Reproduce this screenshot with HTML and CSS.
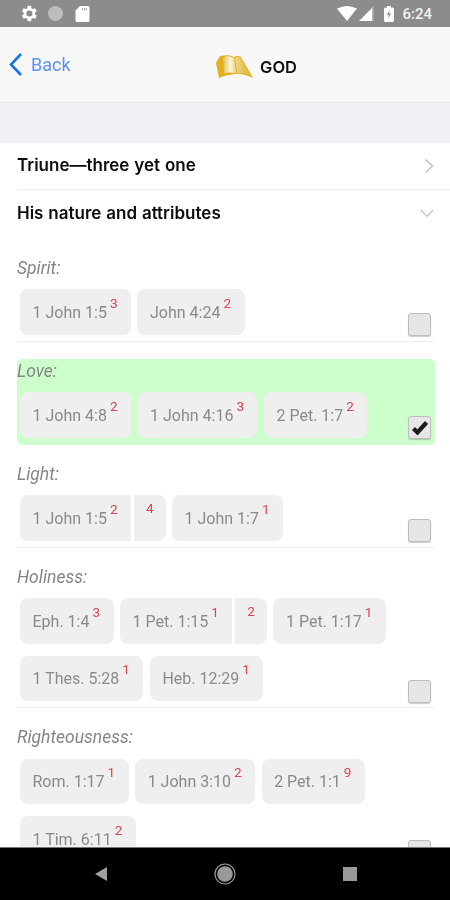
FILE: index.html
```html
<!DOCTYPE html>
<html lang="en">
<head>
    <meta charset="UTF-8">
    <meta name="viewport" content="width=device-width, initial-scale=1.0">
    <title>God</title>
    <link rel="stylesheet" href="styles.css">
</head>
<body>
<div class="phone">

    <div class="statusbar">
        <div class="status-left">
            <svg width="21" height="21" viewBox="0 0 24 24"><path fill="#fff" d="M19.400 13a7.500 7.500 0 0 0 0-2l2.100-1.600-2-3.500-2.500 1a7.500 7.500 0 0 0-1.700-1L15 3.200h-4l-.4 2.700a7.500 7.500 0 0 0-1.700 1l-2.500-1-2 3.500L6.500 11a7.500 7.500 0 0 0 0 2l-2.100 1.600 2 3.500 2.500-1a7.500 7.500 0 0 0 1.700 1l.4 2.700h4l.4-2.700a7.500 7.500 0 0 0 1.700-1l2.500 1 2-3.500zM13 15.500a3.500 3.500 0 1 1 0-7 3.500 3.500 0 0 1 0 7z"/></svg>
            <span class="status-dot"></span>
            <svg class="sdcard" width="15" height="17" viewBox="0 0 15 17"><path fill="#fff" d="M5 1h8a1.500 1.500 0 0 1 1.500 1.500v13A1.500 1.500 0 0 1 13 17H2a1.500 1.500 0 0 1-1.500-1.500V5.500z"/><path fill="#aaa" d="M7 3h1v2.500H7zM9 3h1v2.500H9zM11 3h1v2.500h-1z"/></svg>
        </div>
        <div class="status-right">
            <svg width="20" height="15" viewBox="0 0 20 15"><path fill="#fff" d="M0 2.500Q10-2.500 20 2.500L10 15z"/></svg>
            <svg class="signal" width="15" height="15" viewBox="0 0 15 15"><path fill="#fff" d="M0 15 13 2v13z"/><path fill="#b5b5b5" d="M13 1h1.500v14H13z"/></svg>
            <svg class="battery" width="10" height="16" viewBox="0 0 10 16"><path fill="#fff" d="M3 0h4v1.500h1.500A1.500 1.500 0 0 1 10 3v11.500A1.500 1.500 0 0 1 8.500 16h-7A1.500 1.500 0 0 1 0 14.500V3a1.500 1.500 0 0 1 1.500-1.500H3z"/><path fill="#8c8c8c" d="M5.500 4 3 9h1.800L4.200 12.500 7 7.500H5.200z"/></svg>
            <span class="clock">6:24</span>
        </div>
    </div>

    <header class="topbar">
        <a class="back">
            <svg width="15" height="24" viewBox="0 0 15 24"><path fill="none" stroke="#1673ea" stroke-width="2.600" d="M12 2 2 12.500 12 23"/></svg>
            <span>Back</span>
        </a>
        <div class="title">
            <svg width="38" height="24" viewBox="0 0 38 24">
                <defs>
                    <linearGradient id="leftpage" x1="0" y1="0" x2="1" y2="0">
                        <stop offset="0" stop-color="#e6c04e"/>
                        <stop offset="0.550" stop-color="#fbf5dc"/>
                        <stop offset="1" stop-color="#ecd48a"/>
                    </linearGradient>
                    <linearGradient id="rightpage" x1="0" y1="0" x2="1" y2="0">
                        <stop offset="0" stop-color="#f0d68a"/>
                        <stop offset="1" stop-color="#e0b52c"/>
                    </linearGradient>
                </defs>
                <path fill="#e0b01e" d="M4 1Q14-1 18 2 22 0 25 2L37 23Q26 18 18 19 9 20 3 23L0 8z"/>
                <path fill="url(#leftpage)" d="M7 2Q13 0 18 3L20 18Q13 17 8 18z"/>
                <path fill="url(#rightpage)" d="M19 3Q22 1 25 3L34 20Q27 17.500 21 18z"/>
            </svg>
            <span>GOD</span>
        </div>
    </header>

    <div class="content">
        <div class="band"></div>

        <div class="row">
            <span>Triune—three yet one</span>
            <svg width="10" height="16" viewBox="0 0 10 16"><path fill="none" stroke="#c4c4c8" stroke-width="1.600" d="m1.500 1.500 7 6.500-7 6.500"/></svg>
        </div>
        <div class="row open">
            <span>His nature and attributes</span>
            <svg width="14" height="9" viewBox="0 0 14 9"><path fill="none" stroke="#c8c8cc" stroke-width="1.500" d="m.7 1 6.300 6.300L13.300 1"/></svg>
        </div>

        <section class="group">
            <div class="group-label">Spirit:</div>
            <div class="group-body">
                <div class="chips">
                    <span class="chip">1 John 1:5<sup>3</sup></span>
                    <span class="chip">John 4:24<sup>2</sup></span>
                </div>
                <span class="check"></span>
            </div>
        </section>

        <section class="group selected">
            <div class="group-label">Love:</div>
            <div class="group-body">
                <div class="chips">
                    <span class="chip">1 John 4:8<sup>2</sup></span>
                    <span class="chip">1 John 4:16<sup>3</sup></span>
                    <span class="chip">2 Pet. 1:7<sup>2</sup></span>
                </div>
                <span class="check">
                    <svg width="16" height="14" viewBox="0 0 16 14"><path fill="none" stroke="#1c1c1c" stroke-width="4.200" d="m1.500 7.500 4 4L14.500 1.500"/></svg>
                </span>
            </div>
        </section>

        <section class="group">
            <div class="group-label">Light:</div>
            <div class="group-body">
                <div class="chips">
                    <span class="split">
                        <span class="chip">1 John 1:5<sup>2</sup></span>
                        <span class="chip note"><sup>4</sup></span>
                    </span>
                    <span class="chip">1 John 1:7<sup>1</sup></span>
                </div>
                <span class="check"></span>
            </div>
        </section>

        <section class="group">
            <div class="group-label">Holiness:</div>
            <div class="group-body">
                <div class="chips">
                    <span class="chip">Eph. 1:4<sup>3</sup></span>
                    <span class="split">
                        <span class="chip">1 Pet. 1:15<sup>1</sup></span>
                        <span class="chip note"><sup>2</sup></span>
                    </span>
                    <span class="chip">1 Pet. 1:17<sup>1</sup></span>
                    <span class="chip">1 Thes. 5:28<sup>1</sup></span>
                    <span class="chip">Heb. 12:29<sup>1</sup></span>
                </div>
                <span class="check"></span>
            </div>
        </section>

        <section class="group">
            <div class="group-label">Righteousness:</div>
            <div class="group-body">
                <div class="chips">
                    <span class="chip">Rom. 1:17<sup>1</sup></span>
                    <span class="chip">1 John 3:10<sup>2</sup></span>
                    <span class="chip">2 Pet. 1:1<sup>9</sup></span>
                    <span class="chip">1 Tim. 6:11<sup>2</sup></span>
                </div>
                <span class="check"></span>
            </div>
        </section>
    </div>

    <nav class="navbar">
        <svg width="12" height="14" viewBox="0 0 12 14"><path fill="#a0a0a0" d="M12 0v14L0 7z"/></svg>
        <svg width="22" height="22" viewBox="0 0 22 22"><circle cx="11" cy="11" r="10" fill="none" stroke="#999" stroke-width="1.200"/><circle cx="11" cy="11" r="7.800" fill="#999"/></svg>
        <span class="nav-square"></span>
    </nav>

</div>
</body>
</html>
```

FILE: styles.css
```css
html, body {
    margin: 0;
    padding: 0;
}
body {
    font-family: Roboto, "Liberation Sans", sans-serif;
    background-color: #ffffff;
}
.phone {
    display: flex;
    flex-direction: column;
    width: 450px;
    height: 900px;
    overflow: hidden;
    filter: blur(0.6px);
}

/* barra de estado */
.statusbar {
    flex: none;
    display: flex;
    justify-content: space-between;
    align-items: center;
    height: 27px;
    padding: 0 18px;
    background-color: #8c8c8c;
}
.status-left,
.status-right {
    display: flex;
    align-items: center;
}
.status-left {
    gap: 9px;
}
.status-dot {
    width: 15px;
    height: 15px;
    border-radius: 50%;
    background-color: #bdbdbd;
}
.sdcard {
    margin-left: 3px;
}
.signal {
    margin-left: 2px;
}
.battery {
    margin-left: 10px;
}
.clock {
    margin-left: 8px;
    color: #f2f2f2;
    font-size: 15px;
    font-weight: 500;
}

/* cabecera */
.topbar {
    flex: none;
    display: flex;
    justify-content: space-between;
    height: 76px;
    padding: 0 153px 0 9px;
    box-sizing: border-box;
    background-color: #f8f8f8;
    border-bottom: 1px solid #e6e6ea;
}
.back {
    display: flex;
    align-items: center;
    gap: 7px;
    height: 74px;
    color: #5a92f2;
    font-size: 18px;
}
.title {
    display: flex;
    align-items: center;
    gap: 6px;
    height: 79px;
    color: #111;
    font-family: Inter, Roboto, sans-serif;
    font-size: 16.5px;
    font-weight: 600;
}

.content {
    flex: 1;
    min-height: 0;
    overflow: hidden;
}
.band {
    height: 40px;
    background-color: #efeff4;
}

/* filas de la lista */
.row {
    display: flex;
    justify-content: space-between;
    align-items: center;
    height: 46px;
    margin-left: 17px;
    padding-right: 16px;
    border-bottom: 1px solid #efeff2;
    color: #0c0c0c;
    font-family: Inter, Roboto, sans-serif;
    font-size: 17px;
    font-weight: 600;
    word-spacing: 0.6px;
}
.row span {
    margin-bottom: 2px;
}
.row.open {
    height: 47px;
    margin-bottom: 18.5px;
    border-bottom: none;
}

/* grupos de versiculos */
.group {
    margin: 0 15px 17px 17px;
    padding-bottom: 3px;
    border-bottom: 1px solid #efefef;
}
.group.selected {
    padding-bottom: 4px;
    border-bottom: none;
    border-radius: 5px;
    background-color: #ccffcc;
}
.group-label {
    height: 24px;
    margin-bottom: 9.5px;
    color: #858585;
    font-size: 17.5px;
    font-style: italic;
    line-height: 25px;
}
.group-body {
    display: flex;
    justify-content: space-between;
    align-items: flex-end;
    padding: 0 4px 0 3px;
}
.chips {
    display: flex;
    flex-wrap: wrap;
    gap: 12px 6.5px;
    margin-bottom: 3px;
}
.chip {
    display: inline-flex;
    align-items: center;
    box-sizing: border-box;
    height: 45.5px;
    padding: 1px 13.5px 0 12.5px;
    border-radius: 8px;
    background-color: #efefef;
    color: #8a8a8a;
    font-size: 16px;
    white-space: nowrap;
}
.chip sup {
    margin: -18px 0 0 3px;
    color: #dd4450;
    font-size: 13.5px;
    line-height: 13px;
}
.split {
    display: inline-flex;
    gap: 3px;
}
.split .chip:first-child {
    border-radius: 8px 0 0 8px;
}
.split .note {
    padding: 0 12px;
    border-radius: 0 8px 8px 0;
}
.split .note sup {
    margin-left: 0;
}
.check {
    flex: none;
    display: flex;
    justify-content: center;
    align-items: center;
    width: 21px;
    height: 21px;
    margin-bottom: 1.5px;
    border: 1px solid #bdbdbd;
    border-radius: 3px;
    background-color: #e6e6e6;
    box-shadow: 0 1px 1px rgba(0, 0, 0, 0.2);
}

/* barra de navegacion */
.navbar {
    flex: none;
    display: flex;
    justify-content: center;
    align-items: center;
    gap: 107px;
    height: 52px;
    padding-left: 2px;
    border-top: 1px solid #777;
    background-color: #000000;
}
.nav-square {
    width: 14px;
    height: 14px;
    background-color: #999;
}
```
